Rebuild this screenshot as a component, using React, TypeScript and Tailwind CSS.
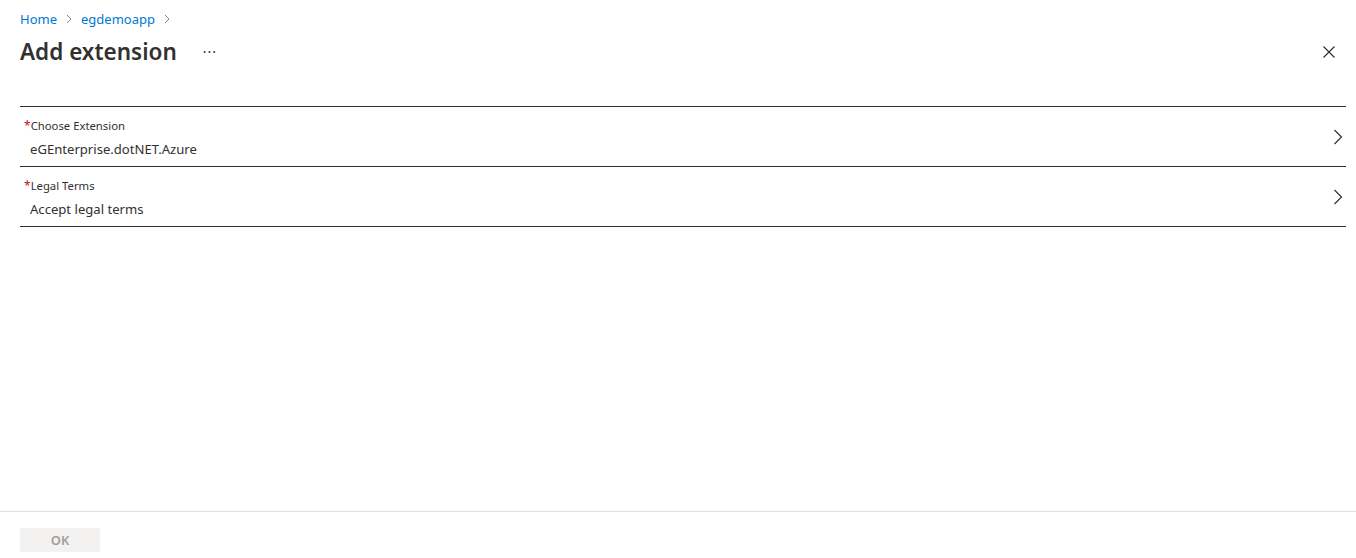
import React from "react";

const font = { fontFamily: '"Segoe UI", "Noto Sans", "Open Sans", sans-serif' };

function Chevron() {
  return (
    <svg width="10" height="16" viewBox="0 0 10 16" fill="none" stroke="#323130" strokeWidth="1.2">
      <path d="M1.5 1 L8.5 8 L1.5 15" />
    </svg>
  );
}

function Row({ label, value }: { label: string; value: string }) {
  return (
    <div className="flex items-center border-b border-[#323130] h-[60px] pl-[4px] pr-[3px]">
      <div className="flex-1 flex flex-col">
        <div className="text-[11.3px] leading-[16px] text-[#323130] mt-[3px]">
          <span className="text-[#c50f1f] text-[12px]">*</span>
          {label}
        </div>
        <div className="text-[13.1px] leading-[20px] text-[#323130] mt-[5px] pl-[6px]">{value}</div>
      </div>
      <Chevron />
    </div>
  );
}

export default function App() {
  return (
    <div className="w-[1356px] h-[558px] bg-white flex flex-col" style={font}>
      <div className="pl-[20px] pr-[10px] flex-1">
        <div className="flex items-center text-[13px] leading-[18px] text-[#0078d4] pt-[10px] gap-[8px]">
          <span>Home</span>
          <svg width="8" height="10" viewBox="0 0 8 10" fill="none" stroke="#8a8886" strokeWidth="1">
            <path d="M2 1 L6 5 L2 9" />
          </svg>
          <span>egdemoapp</span>
          <svg width="8" height="10" viewBox="0 0 8 10" fill="none" stroke="#8a8886" strokeWidth="1">
            <path d="M2 1 L6 5 L2 9" />
          </svg>
        </div>
        <div className="flex items-center mt-[5px] h-[36px]">
          <div className="text-[22.5px] font-semibold leading-[32px] text-[#323130] mt-[2px]">Add extension</div>
          <div className="ml-[26px] text-[14px] text-[#323130] tracking-[1px] mt-[0px]">···</div>
          <div className="flex-1" />
          <svg width="12" height="12" viewBox="0 0 12 12" stroke="#323130" strokeWidth="1.2" className="mr-[11px] mt-[2px]">
            <path d="M0.5 0.5 L11.5 11.5 M11.5 0.5 L0.5 11.5" />
          </svg>
        </div>
        <div className="mt-[37px] border-t border-[#323130]">
          <Row label="Choose Extension" value="eGEnterprise.dotNET.Azure" />
          <Row label="Legal Terms" value="Accept legal terms" />
        </div>
      </div>
      <div className="border-t border-[#e1dfdd] h-[47px] px-[20px] pt-[15px]">
        <button className="w-[80px] h-[24px] bg-[#f3f2f1] text-[#a19f9d] text-[13px] font-semibold rounded-[2px] leading-[24px]">
          OK
        </button>
      </div>
    </div>
  );
}
